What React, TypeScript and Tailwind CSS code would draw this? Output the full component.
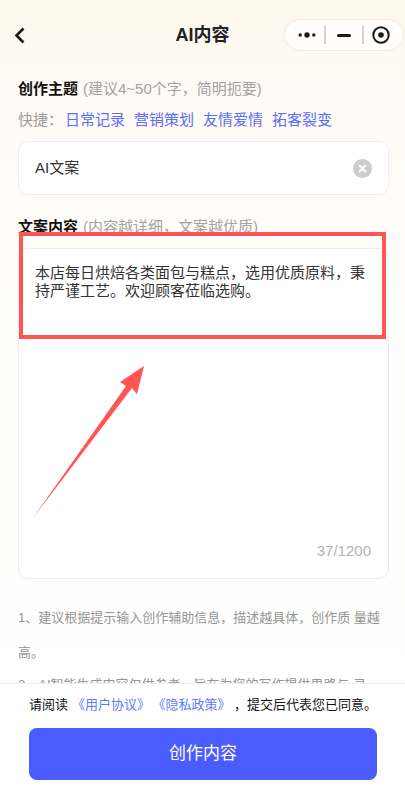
import React from "react";

const FONT = "font-['Liberation_Sans','Noto_Sans_CJK_SC',sans-serif]";

function Capsule() {
  return (
    <div className="flex h-8 w-[120px] items-center rounded-full border border-[#eeeae4] bg-[#fffefc]">
      <div className="flex w-[39px] items-center justify-center pl-[5px]">
        <svg width="20" height="8" viewBox="0 0 20 8" fill="#1a1a1a">
          <circle cx="3.2" cy="4" r="1.7" />
          <circle cx="10" cy="4" r="2.7" />
          <circle cx="16.8" cy="4" r="1.7" />
        </svg>
      </div>
      <div className="h-[18px] w-[2px] bg-[#d4d2cf]" />
      <div className="flex w-[36px] items-center justify-center">
        <div className="h-[3px] w-[14px] rounded-sm bg-[#1a1a1a]" />
      </div>
      <div className="h-[18px] w-[2px] bg-[#d4d2cf]" />
      <div className="flex flex-1 items-center justify-center pr-[5px]">
        <svg width="20" height="20" viewBox="0 0 20 20">
          <circle cx="10" cy="10" r="7.7" fill="none" stroke="#1a1a1a" strokeWidth="2" />
          <circle cx="10" cy="10" r="2.8" fill="#1a1a1a" />
        </svg>
      </div>
    </div>
  );
}

export default function App() {
  return (
    <div className={`relative flex h-[788px] w-[405px] flex-col overflow-hidden bg-white ${FONT}`}>
      <main className="min-h-0 flex-1 overflow-hidden bg-gradient-to-b from-[#fef8ee] via-[#fffdfa] via-30% to-white">
        <header className="relative flex h-[79px] items-center justify-center pb-[9px]">
          <svg className="absolute left-[13px] top-[25px]" width="14" height="20" viewBox="0 0 14 20" fill="none">
            <path d="M10.5 3.5 L3.5 10.5 L10.5 17.5" stroke="#1a1a1a" strokeWidth="2.6" />
          </svg>
          <h1 className="text-[18px] font-bold text-[#222]">AI内容</h1>
          <div className="absolute left-[284px] top-[19px]">
            <Capsule />
          </div>
        </header>

        <div className="px-[18px]">
          <div className="flex h-[20px] items-center leading-5">
            <span className="text-[15px] font-bold text-[#111]">创作主题</span>
            <span className="ml-[5px] text-[15px] text-[#a3a3a3]">(建议4~50个字，简明扼要)</span>
          </div>
          <div className="mt-[11px] flex h-[20px] items-center text-[15px] leading-5">
            <span className="w-[47px] whitespace-nowrap text-[#a09a94]">快捷：</span>
            <div className="flex gap-[9px] text-[#5a6cff]">
              <span>日常记录</span>
              <span>营销策划</span>
              <span>友情爱情</span>
              <span>拓客裂变</span>
            </div>
          </div>

          <div className="mt-[11px] flex h-[54px] w-[371px] items-center justify-between rounded-[10px] border border-[#eeeeee] bg-white pl-[16px] pr-[16px]">
            <span className="text-[15px] text-[#333]">AI文案</span>
            <div className="flex h-[19px] w-[19px] items-center justify-center rounded-full bg-[#cccccc]">
              <svg width="9" height="9" viewBox="0 0 9 9" stroke="#fff" strokeWidth="2">
                <path d="M1 1 L8 8 M8 1 L1 8" />
              </svg>
            </div>
          </div>

          <div className="mt-[22px] flex h-[20px] items-center leading-5">
            <span className="text-[15px] font-bold text-[#111]">文案内容</span>
            <span className="ml-[5px] text-[15px] text-[#a3a3a3]">(内容越详细，文案越优质)</span>
          </div>

          <div className="mt-[11px] flex h-[331px] w-[371px] flex-col justify-between rounded-[10px] border border-[#eeeeee] bg-white pb-[16px] pl-[16px] pr-[17px] pt-[15px]">
            <p className="pr-[4px] text-[15px] leading-[18px] text-[#333]">
              本店每日烘焙各类面包与糕点，选用优质原料，秉持严谨工艺。欢迎顾客莅临选购。
            </p>
            <div className="text-right text-[15px] text-[#b4b4b4]">37/1200</div>
          </div>

          <div className="mt-[21px] text-[13px] leading-[35px] text-[#959595]">
            <p>1、建议根据提示输入创作辅助信息，描述越具体，创作质 量越高。</p>
            <p className="-mt-[3px]">2、AI智能生成内容仅供参考，旨在为您的写作提供思路与 灵感。</p>
          </div>
        </div>
      </main>

      <footer className="h-[105px] shrink-0 border-t border-[#eeeeee] bg-white px-[29px] pt-[12px]">
        <p className="h-[18px] whitespace-nowrap text-[13px] leading-[18px] text-[#111]">
          请阅读<span className="ml-[4px] text-[#5a7cff]">《用户协议》</span>
          <span className="ml-[9px] text-[#5a7cff]">《隐私政策》</span>
          <span className="ml-[10px]">，提交后代表您已同意。</span>
        </p>
        <button className="mt-[14px] flex h-[52px] w-[348px] items-center justify-center rounded-[8px] bg-[#4a5cff] text-[17px] text-white">
          创作内容
        </button>
      </footer>

      <div className="pointer-events-none absolute left-[19px] top-[232px] h-[107px] w-[367px] border-[4px] border-[#ff5555]" />
      <svg className="pointer-events-none absolute left-0 top-0" width="405" height="788" viewBox="0 0 405 788">
        <path d="M33 518 L126 386 L120 382 L144 366 L137 394 L132 388 Z" fill="#ff5555" />
      </svg>
    </div>
  );
}
